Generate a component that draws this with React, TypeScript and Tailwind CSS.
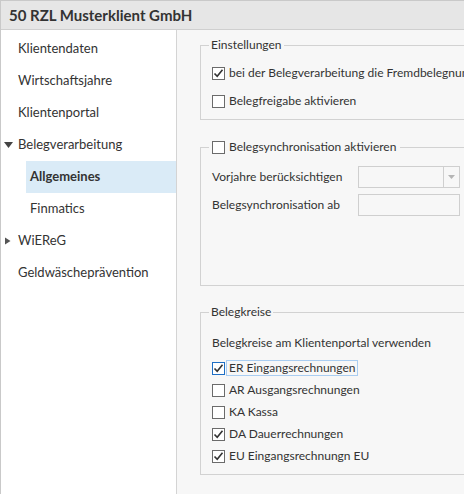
import React from 'react';

const font = { fontFamily: 'Lato, "Noto Sans", sans-serif' };

const Check = ({ checked, focus }: { checked?: boolean; focus?: boolean }) => (
  <span
    className={`flex h-[13px] w-[13px] shrink-0 items-center justify-center border bg-white ${
      focus ? 'border-[#1f6fc5]' : 'border-[#6b6b6b]'
    }`}
  >
    {checked && (
      <svg width="11" height="11" viewBox="0 0 11 11">
        <path d="M1.5 5.5 L4.2 8.3 L9.5 1.8" fill="none" stroke="#333" strokeWidth="1.6" />
      </svg>
    )}
  </span>
);

const CheckRow = ({ label, checked, focus }: { label: string; checked?: boolean; focus?: boolean }) => (
  <div className="flex h-[22px] items-center">
    <Check checked={checked} focus={focus} />
    <span
      className={`ml-[1px] border px-[2px] leading-[14px] ${focus ? 'border-[#a9cdf1]' : 'border-transparent'}`}
    >
      {label}
    </span>
  </div>
);

const navItems = [
  { label: 'Klientendaten' },
  { label: 'Wirtschaftsjahre' },
  { label: 'Klientenportal' },
  { label: 'Belegverarbeitung', open: true },
  { label: 'Allgemeines', child: true, active: true },
  { label: 'Finmatics', child: true },
  { label: 'WiEReG', closed: true },
  { label: 'Geldwäscheprävention' },
];

export default function App() {
  return (
    <div
      className="flex h-[494px] w-[464px] flex-col overflow-hidden border-l border-t border-[#c9c9c9] text-[13px] text-[#333]"
      style={font}
    >
      <div className="flex h-[29px] shrink-0 items-center border-b border-[#cfcfcf] bg-[#e6e6e6] pl-[8px] text-[15px] font-bold text-[#333]">
        50 RZL Musterklient GmbH
      </div>
      <div className="flex min-h-0 flex-1">
        <div className="w-[176px] shrink-0 border-r border-[#d4d4d4] bg-white pt-[3px]">
          {navItems.map((it) => (
            <div key={it.label} className={`flex h-[32px] items-center ${it.child ? 'pl-[25px]' : ''}`}>
              {it.child ? (
                <div
                  className={`flex h-[32px] flex-1 items-center pl-[4px] ${
                    it.active ? 'bg-[#daebf7] font-bold' : ''
                  }`}
                >
                  {it.label}
                </div>
              ) : (
                <div className="relative flex items-center pl-[17px]">
                  {it.open && (
                    <svg className="absolute left-[3px]" width="9" height="8" viewBox="0 0 9 8">
                      <path d="M0 1 H9 L4.5 7 Z" fill="#444" />
                    </svg>
                  )}
                  {it.closed && (
                    <svg className="absolute left-[4px]" width="6" height="8" viewBox="0 0 6 8">
                      <path d="M0 0.5 L5.5 4 L0 7.5 Z" fill="#555" />
                    </svg>
                  )}
                  {it.label}
                </div>
              )}
            </div>
          ))}
        </div>
        <div className="min-w-0 flex-1 overflow-hidden bg-[#f7f7f7] pl-[23px] pt-[7px] text-[12px]">
          <fieldset className="w-[300px] border border-[#d2d2d2] pb-[7px] pl-[11px]">
            <legend className="ml-[-3px] px-[2px] leading-[16px]">Einstellungen</legend>
            <div className="mt-[9px] flex flex-col gap-[6px] whitespace-nowrap">
              <CheckRow checked label="bei der Belegverarbeitung die Fremdbelegnummer übernehmen" />
              <CheckRow label="Belegfreigabe aktivieren" />
            </div>
          </fieldset>

          <fieldset className="mt-[17px] w-[300px] border border-[#d2d2d2] pb-[69px] pl-[11px]">
            <legend className="ml-[-3px] pl-[3px] pr-[4px] leading-[20px]">
              <span className="flex items-center">
                <Check />
                <span className="ml-[4px]">Belegsynchronisation aktivieren</span>
              </span>
            </legend>
            <div className="mt-[9px] flex flex-col gap-[6px]">
              <div className="flex h-[22px] items-center">
                <span className="w-[146px]">Vorjahre berücksichtigen</span>
                <div className="flex h-[22px] w-[102px] border border-[#cfcfcf]">
                  <div className="flex-1" />
                  <div className="flex w-[16px] items-center justify-center border-l border-[#cfcfcf]">
                    <svg width="7" height="4" viewBox="0 0 7 4">
                      <path d="M0 0 H7 L3.5 4 Z" fill="#b5b5b5" />
                    </svg>
                  </div>
                </div>
              </div>
              <div className="flex h-[22px] items-center">
                <span className="w-[146px]">Belegsynchronisation ab</span>
                <div className="h-[22px] w-[102px] border border-[#cfcfcf]" />
              </div>
            </div>
          </fieldset>

          <fieldset className="mt-[18px] w-[300px] border border-[#d2d2d2] pb-[7px] pl-[11px]">
            <legend className="ml-[-3px] px-[2px] leading-[16px]">Belegkreise</legend>
            <div className="mt-[13px] flex h-[20px] items-center">Belegkreise am Klientenportal verwenden</div>
            <div className="mt-[4px] flex flex-col">
              <CheckRow checked focus label="ER Eingangsrechnungen" />
              <CheckRow label="AR Ausgangsrechnungen" />
              <CheckRow label="KA Kassa" />
              <CheckRow checked label="DA Dauerrechnungen" />
              <CheckRow checked label="EU Eingangsrechnungn EU" />
            </div>
          </fieldset>
        </div>
      </div>
    </div>
  );
}
